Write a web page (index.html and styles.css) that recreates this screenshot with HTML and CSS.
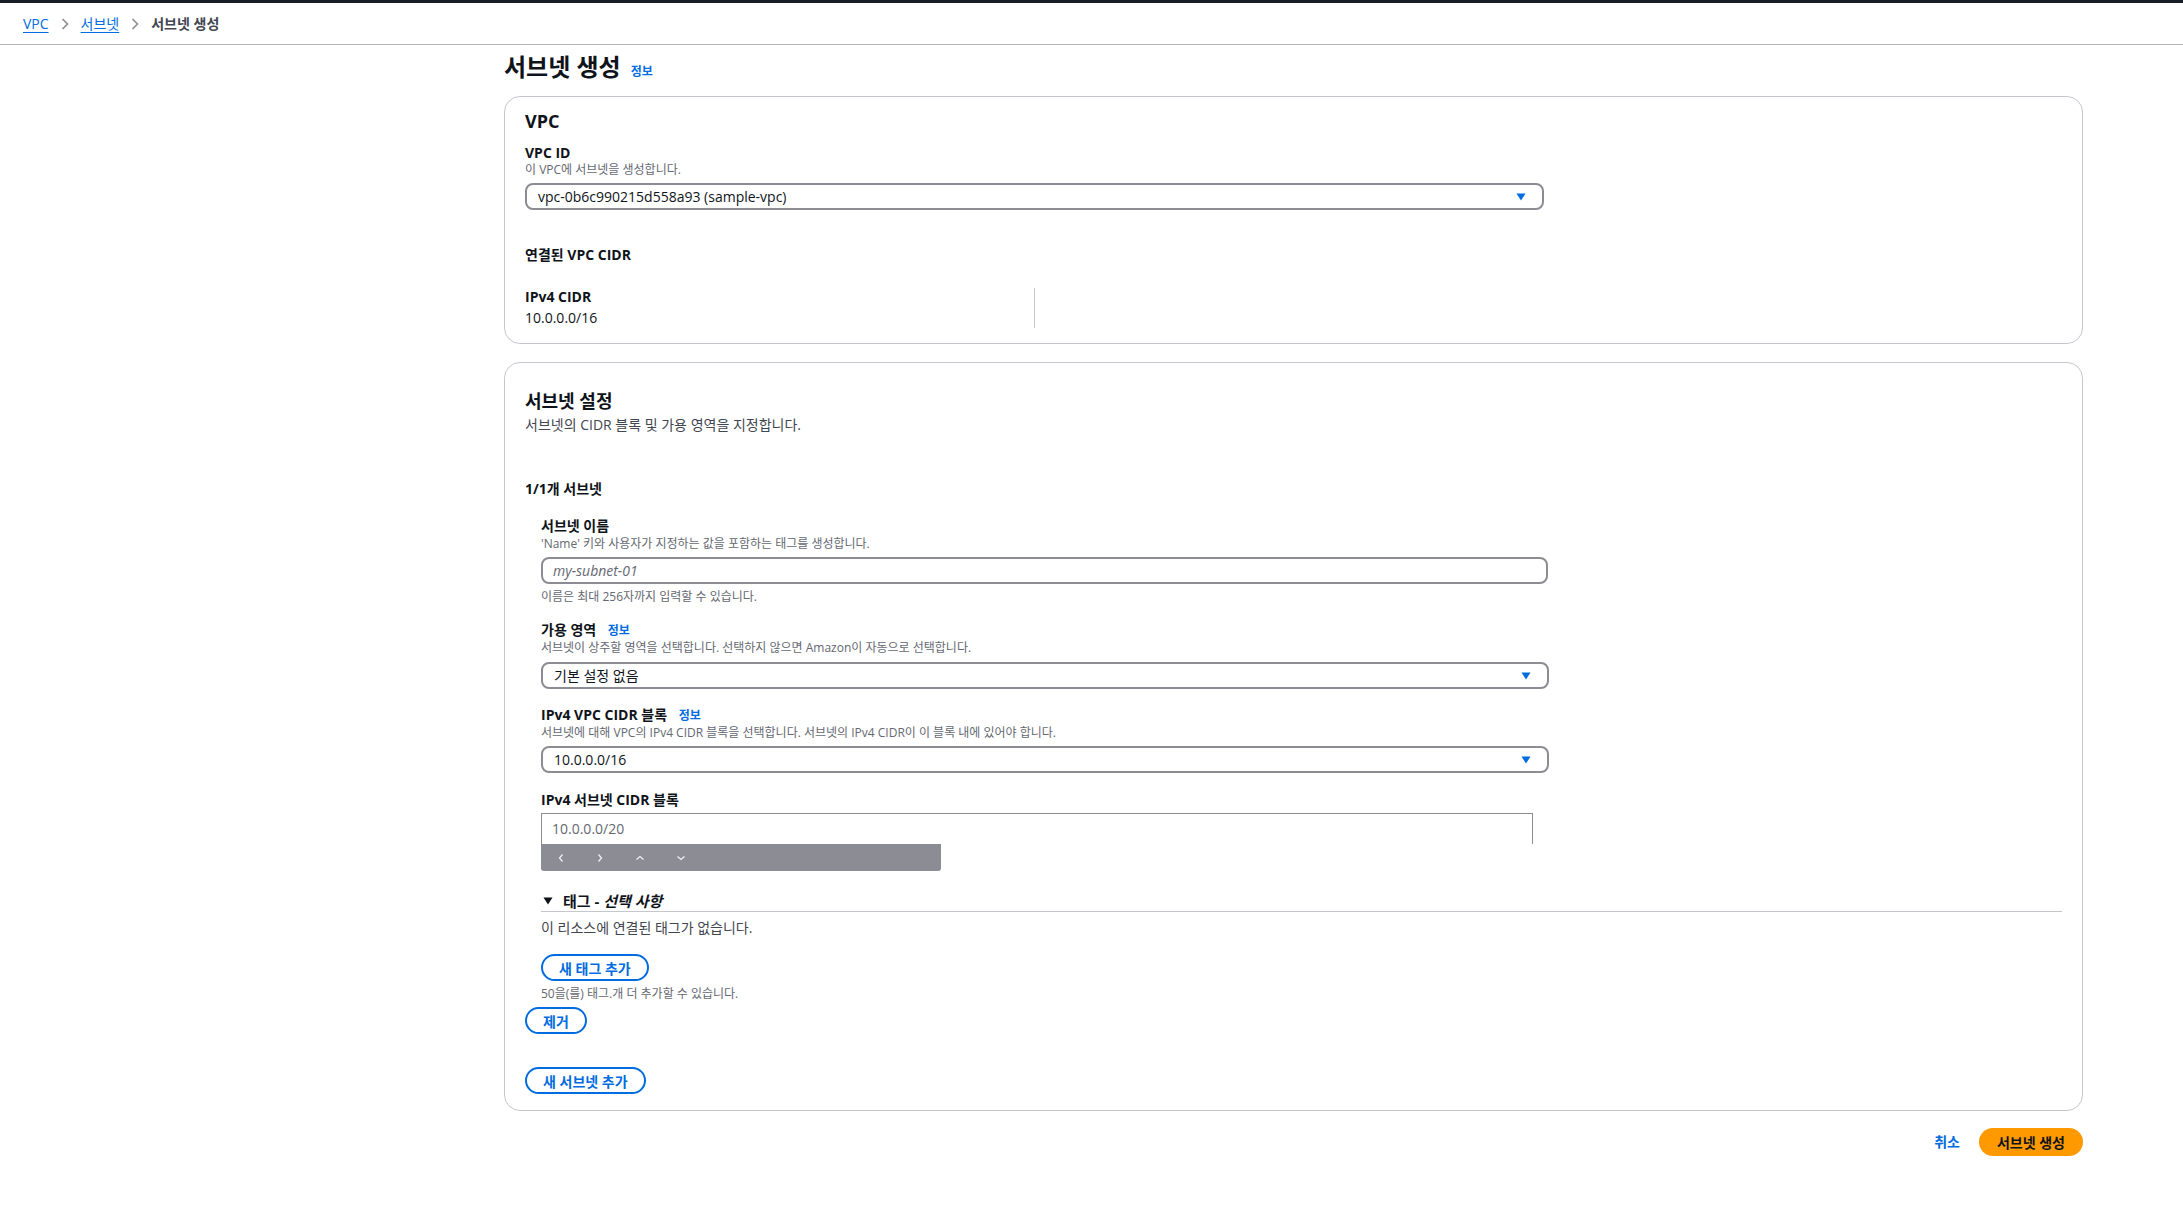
FILE: index.html
```html
<!DOCTYPE html>
<html lang="ko">
<head>
<meta charset="utf-8">
<title>서브넷 생성</title>
<link rel="stylesheet" href="styles.css">
</head>
<body>
<div class="topbar"></div>
<nav class="breadcrumbs">
  <a class="crumb-link" href="#">VPC</a>
  <svg class="crumb-sep" width="8" height="12" viewBox="0 0 8 12"><path d="M1.5 1l5 5-5 5" fill="none" stroke="#8c8c94" stroke-width="1.6"/></svg>
  <a class="crumb-link" href="#">서브넷</a>
  <svg class="crumb-sep" width="8" height="12" viewBox="0 0 8 12"><path d="M1.5 1l5 5-5 5" fill="none" stroke="#8c8c94" stroke-width="1.6"/></svg>
  <span class="crumb-current">서브넷 생성</span>
</nav>

<main class="page">
  <h1 class="page-title"><span>서브넷 생성</span><a class="info-link" href="#">정보</a></h1>

  <section class="card card-vpc">
    <h2 class="card-title">VPC</h2>
    <div class="field-label mt12">VPC ID</div>
    <div class="desc">이 VPC에 서브넷을 생성합니다.</div>
    <div class="select select-vpc">
      <span>vpc-0b6c990215d558a93 (sample-vpc)</span>
      <svg class="caret" width="10" height="8" viewBox="0 0 10 8"><path d="M0.5 0.5h9L5 7.5z" fill="#006ce0"/></svg>
    </div>
    <div class="subhead">연결된 VPC CIDR</div>
    <div class="cidr-cols">
      <div class="cidr-col">
        <div class="field-label">IPv4 CIDR</div>
        <div class="value">10.0.0.0/16</div>
      </div>
      <div class="cidr-col cidr-col-empty"></div>
    </div>
  </section>

  <section class="card card-subnet">
    <h2 class="card-title card-title-lg">서브넷 설정</h2>
    <div class="card-desc">서브넷의 CIDR 블록 및 가용 영역을 지정합니다.</div>
    <div class="subnet-count">1/1개 서브넷</div>

    <div class="subnet-item">
      <div class="field-label mt19">서브넷 이름</div>
      <div class="desc mt1">'Name' 키와 사용자가 지정하는 값을 포함하는 태그를 생성합니다.</div>
      <div class="input input-round"><span class="placeholder">my-subnet-01</span></div>
      <div class="desc mt5">이름은 최대 256자까지 입력할 수 있습니다.</div>

      <div class="field-label mt16">가용 영역 <a class="info-link info-sm" href="#">정보</a></div>
      <div class="desc mt1">서브넷이 상주할 영역을 선택합니다. 선택하지 않으면 Amazon이 자동으로 선택합니다.</div>
      <div class="select select-sub mt6">
        <span>기본 설정 없음</span>
        <svg class="caret" width="10" height="8" viewBox="0 0 10 8"><path d="M0.5 0.5h9L5 7.5z" fill="#006ce0"/></svg>
      </div>

      <div class="field-label mt17">IPv4 VPC CIDR 블록 <a class="info-link info-sm" href="#">정보</a></div>
      <div class="desc mt1">서브넷에 대해 VPC의 IPv4 CIDR 블록을 선택합니다. 서브넷의 IPv4 CIDR이 이 블록 내에 있어야 합니다.</div>
      <div class="select select-sub mt5">
        <span>10.0.0.0/16</span>
        <svg class="caret" width="10" height="8" viewBox="0 0 10 8"><path d="M0.5 0.5h9L5 7.5z" fill="#006ce0"/></svg>
      </div>

      <div class="field-label mt18">IPv4 서브넷 CIDR 블록</div>
      <div class="input input-square"><span class="input-value">10.0.0.0/20</span></div>
      <div class="stepper-bar">
        <svg width="8" height="10" viewBox="0 0 8 10"><path d="M5.5 1.5L2.5 5l3 3.5" fill="none" stroke="#f0f0f2" stroke-width="1.3"/></svg>
        <svg width="8" height="10" viewBox="0 0 8 10"><path d="M2.5 1.5L5.5 5l-3 3.5" fill="none" stroke="#f0f0f2" stroke-width="1.3"/></svg>
        <svg width="10" height="8" viewBox="0 0 10 8"><path d="M1.5 5.5L5 2.5l3.5 3" fill="none" stroke="#f0f0f2" stroke-width="1.3"/></svg>
        <svg width="10" height="8" viewBox="0 0 10 8"><path d="M1.5 2.5L5 5.5l3.5-3" fill="none" stroke="#f0f0f2" stroke-width="1.3"/></svg>
      </div>

      <div class="tags-heading">
        <svg class="tags-caret" width="10" height="8" viewBox="0 0 10 8"><path d="M0.5 0.5h9L5 7.5z" fill="#0f141a"/></svg>
        <span>태그 - <em>선택 사항</em></span>
      </div>
      <div class="tags-empty">이 리소스에 연결된 태그가 없습니다.</div>
      <button class="btn-outline mt16" type="button">새 태그 추가</button>
      <div class="desc mt5">50을(를) 태그.개 더 추가할 수 있습니다.</div>
    </div>
    <button class="btn-outline mt5" type="button">제거</button>
    <div>
      <button class="btn-outline mt33" type="button">새 서브넷 추가</button>
    </div>
  </section>

  <div class="footer-actions">
    <a class="cancel-link" href="#">취소</a>
    <button class="btn-primary" type="button">서브넷 생성</button>
  </div>
</main>
</body>
</html>
```

FILE: styles.css
```css
* { box-sizing: border-box; }

body {
  margin: 0;
  background: #ffffff;
  color: #0f141a;
  font-family: "Open Sans", "Noto Sans CJK KR", sans-serif;
  font-size: 14px;
  line-height: 20px;
}

.topbar {
  height: 3px;
  background: #161d26;
}

.breadcrumbs {
  height: 42px;
  display: flex;
  align-items: center;
  padding-left: 23px;
  border-bottom: 1px solid #b4b4bb;
  font-size: 14px;
}

.crumb-link {
  color: #006ce0;
  text-decoration: underline;
  text-underline-offset: 3px;
}

.crumb-sep {
  margin: 0 12px;
}

.crumb-current {
  color: #424650;
  font-weight: 600;
}

.page {
  padding: 0 100px 40px 504px;
}

.page-title {
  margin: 7px 0 14px;
  height: 30px;
  display: flex;
  align-items: baseline;
  gap: 10px;
  font-size: 24px;
  line-height: 30px;
  font-weight: 700;
  color: #0f141a;
}

.info-link {
  color: #006ce0;
  font-size: 12px;
  line-height: 12px;
  font-weight: 700;
  text-decoration: none;
}

.info-sm {
  margin-left: 8px;
}

.card {
  border: 1px solid #c6c6cd;
  border-radius: 16px;
  background: #ffffff;
}

.card-vpc {
  padding: 13px 20px 15px;
}

.card-title {
  margin: 0;
  font-size: 18px;
  line-height: 22px;
  font-weight: 700;
}

.field-label {
  font-size: 14px;
  line-height: 18px;
  font-weight: 700;
}

.desc {
  font-size: 12px;
  line-height: 16px;
  color: #656871;
}

.select {
  height: 27px;
  margin-top: 5px;
  border: 2px solid #8c8c94;
  border-radius: 8px;
  display: flex;
  align-items: center;
  justify-content: space-between;
  padding: 0 16px 0 11px;
  font-size: 14px;
  color: #0f141a;
}

.select-vpc {
  width: 1019px;
}

.select-sub {
  width: 1008px;
}

.subhead {
  margin-top: 36px;
  font-size: 14px;
  line-height: 18px;
  font-weight: 700;
}

.cidr-cols {
  margin-top: 24px;
  display: grid;
  grid-template-columns: 509px 509px;
}

.cidr-col {
  height: 40px;
}

.cidr-col-empty {
  border-left: 1px solid #c6c6cd;
}

.value {
  margin-top: 2px;
  line-height: 20px;
}

.card-subnet {
  margin-top: 18px;
  padding: 0 20px 16px;
}

.card-title-lg {
  margin-top: 26px;
  line-height: 24px;
}

.card-desc {
  margin-top: 2px;
  color: #424650;
  line-height: 20px;
}

.subnet-count {
  margin-top: 45px;
  font-size: 14px;
  line-height: 18px;
  font-weight: 700;
}

.subnet-item {
  padding-left: 16px;
}

.input {
  display: flex;
  align-items: center;
  padding: 0 10px;
  font-size: 14px;
}

.input-round {
  width: 1007px;
  height: 27px;
  margin-top: 5px;
  border: 2px solid #8c8c94;
  border-radius: 8px;
}

.placeholder {
  font-style: italic;
  color: #656871;
}

.input-square {
  width: 992px;
  height: 31px;
  margin-top: 4px;
  border: 1px solid #8c8c94;
  border-bottom: none;
}

.input-value {
  color: #656871;
}

.stepper-bar {
  width: 400px;
  height: 27px;
  background: #8c8c94;
  border-radius: 0 0 3px 3px;
  display: flex;
  align-items: center;
  gap: 31px;
  padding-left: 16px;
}

.tags-heading {
  margin-top: 20px;
  height: 21px;
  display: flex;
  align-items: center;
  gap: 10px;
  padding-left: 2px;
  border-bottom: 1px solid #c6c6cd;
  font-size: 15px;
  line-height: 20px;
  font-weight: 700;
}

.tags-heading em {
  font-style: italic;
}

.tags-empty {
  margin-top: 6px;
  color: #424650;
  line-height: 20px;
}

.btn-outline {
  display: inline-flex;
  align-items: center;
  height: 27px;
  padding: 0 16px;
  border: 2px solid #006ce0;
  border-radius: 20px;
  background: #ffffff;
  color: #006ce0;
  font-family: "Open Sans", "Noto Sans CJK KR", sans-serif;
  font-size: 14px;
  font-weight: 700;
}

.footer-actions {
  margin-top: 17px;
  display: flex;
  justify-content: flex-end;
  align-items: center;
  gap: 19px;
}

.cancel-link {
  color: #006ce0;
  font-weight: 700;
  text-decoration: none;
}

.btn-primary {
  height: 28px;
  padding: 0 18px;
  border: none;
  border-radius: 20px;
  background: #ff9900;
  color: #0f141a;
  font-family: "Open Sans", "Noto Sans CJK KR", sans-serif;
  font-size: 14px;
  font-weight: 700;
}

.mt1 { margin-top: 1px; }
.mt5 { margin-top: 5px; }
.mt6 { margin-top: 6px; }
.mt12 { margin-top: 12px; }
.mt16 { margin-top: 16px; }
.mt17 { margin-top: 17px; }
.mt18 { margin-top: 18px; }
.mt19 { margin-top: 19px; }
.mt33 { margin-top: 33px; }
```
